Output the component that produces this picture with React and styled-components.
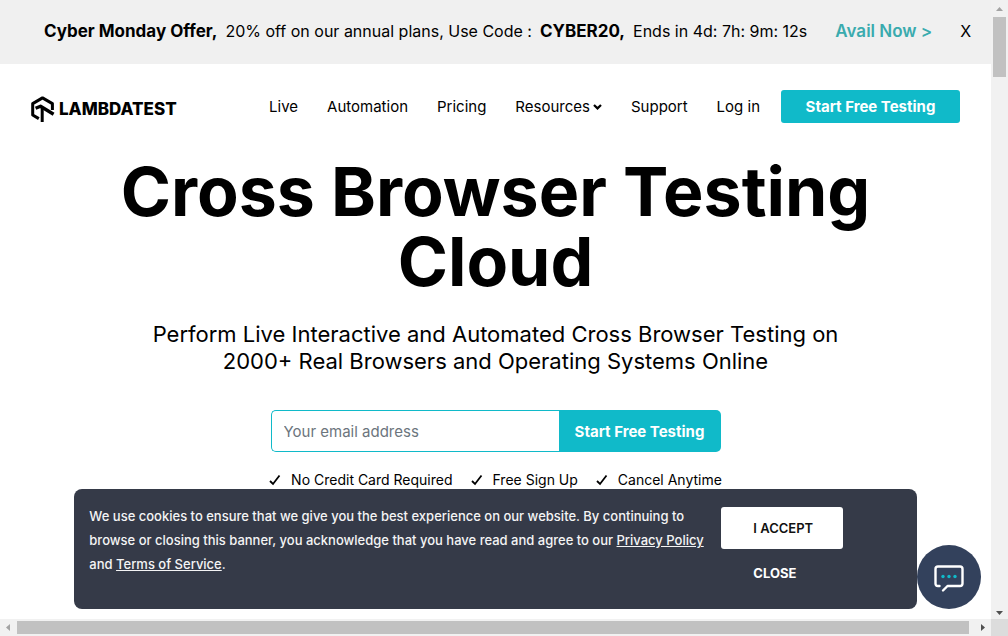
import React from "react";
import styled, { createGlobalStyle } from "styled-components";

const teal = "#10bac9";

const GlobalStyle = createGlobalStyle`
  *, *::before, *::after { box-sizing: border-box; }
  body { margin: 0; background: #fff; color: #000; font-family: Inter, "Open Sans", sans-serif; font-size: 16px; }
  button, input { font-family: inherit; }
  h1, p, ul { margin: 0; padding: 0; }
  a { color: inherit; text-decoration: none; }
`;

const Frame = styled.div`
  display: grid;
  grid-template-columns: minmax(0, 1fr) 17px;
  grid-template-rows: minmax(0, 1fr) 17px;
  height: 100vh;
  overflow: hidden;
`;

const Page = styled.div`
  position: relative;
  overflow: hidden;
`;

const Promo = styled.aside`
  display: flex;
  align-items: center;
  justify-content: space-between;
  gap: 28px;
  height: 64px;
  padding: 0 23px 2px 44px;
  background: #f0f0f0;
  font-size: 16px;
  white-space: nowrap;
`;

const PromoText = styled.p`
  display: flex;
  align-items: baseline;
  gap: 8px;
  margin-right: auto;
  b { font-size: 17px; }
`;

const PromoLink = styled.a`
  color: #3aabae;
  font-size: 17px;
  font-weight: 600;
`;

const Dismiss = styled.button`
  padding: 0;
  border: 0;
  background: none;
  font-size: 16px;
`;

const Header = styled.header`
  display: flex;
  align-items: center;
  justify-content: space-between;
  height: 84px;
  padding: 0 31px 0 30px;
`;

const Brand = styled.a`
  display: flex;
  align-items: center;
  gap: 4px;
  padding-top: 5px;
  font-size: 17px;
  font-weight: 800;
`;

const Nav = styled.nav`
  display: flex;
  align-items: center;
  gap: 21px;
`;

const NavLinks = styled.div`
  display: flex;
  gap: 29px;
  font-size: 15px;
  white-space: nowrap;
`;

const NavLink = styled.a`
  display: flex;
  align-items: center;
  gap: 3px;
`;

const PrimaryButton = styled.button`
  height: ${(p) => (p.$joined ? 42 : 33)}px;
  width: ${(p) => (p.$joined ? 162 : 179)}px;
  padding: 0;
  border: 0;
  border-radius: ${(p) => (p.$joined ? "0 5px 5px 0" : "3px")};
  background: ${teal};
  color: #fff;
  font-size: 15px;
  font-weight: 700;
`;

const Hero = styled.main`
  display: flex;
  flex-direction: column;
  align-items: center;
  padding-top: 8px;
  text-align: center;
`;

const Title = styled.h1`
  max-width: 840px;
  font-size: 68px;
  line-height: 70px;
  font-weight: 700;
`;

const Lead = styled.p`
  max-width: 720px;
  padding-top: 25px;
  font-size: 22px;
  line-height: 27px;
`;

const SignUp = styled.form`
  display: flex;
  padding-top: 35px;
`;

const Email = styled.input`
  width: 288px;
  height: 42px;
  padding: 0 12px;
  border: 1px solid ${teal};
  border-right: 0;
  border-radius: 5px 0 0 5px;
  outline: 0;
  font-size: 15px;
  &::placeholder { color: #6c757d; opacity: 1; }
`;

const Perks = styled.ul`
  display: flex;
  gap: 18px;
  padding-top: 19px;
  list-style: none;
  font-size: 14px;
  line-height: 18px;
`;

const Perk = styled.li`
  display: flex;
  align-items: center;
  gap: 10px;
`;

const Cookies = styled.section`
  position: absolute;
  left: 0;
  right: 0;
  bottom: 10px;
  display: flex;
  gap: 16px;
  width: 85%;
  height: 120px;
  margin: 0 auto;
  padding: 15px;
  border-radius: 8px;
  background: #353a48;
  color: #f4f4f5;
`;

const CookieText = styled.p`
  width: 616px;
  font-size: 13px;
  line-height: 24px;
  font-weight: 500;
  a { text-decoration: underline; }
`;

const CookieActions = styled.div`
  display: flex;
  flex-direction: column;
  width: 122px;
  padding-top: 3px;
`;

const CookieButton = styled.button`
  flex: none;
  height: ${(p) => (p.$plain ? 48 : 42)}px;
  padding: 0 32px;
  border: 0;
  border-radius: 3px;
  background: ${(p) => (p.$plain ? "none" : "#fff")};
  color: ${(p) => (p.$plain ? "#fff" : "#111")};
  font-size: 13px;
  font-weight: ${(p) => (p.$plain ? 700 : 600)};
  text-align: left;
  white-space: nowrap;
`;

const Chat = styled.button`
  position: absolute;
  right: 10px;
  bottom: 10px;
  display: grid;
  place-items: center;
  width: 64px;
  height: 64px;
  padding: 0;
  border: 0;
  border-radius: 50%;
  background: #33415c;
`;

const Track = styled.div`
  display: flex;
  flex-direction: ${(p) => (p.$vertical ? "column" : "row")};
  align-items: center;
  justify-content: space-between;
  background: #f1f1f1;
`;

const Thumb = styled.div`
  width: ${(p) => (p.$vertical ? "13px" : "auto")};
  height: ${(p) => (p.$vertical ? "60px" : "13px")};
  flex: ${(p) => (p.$vertical ? "none" : "1")};
  margin-right: ${(p) => (p.$vertical ? "0" : "5px")};
  background: #c1c1c1;
`;

const Spacer = styled.div`
  flex: 1;
`;

const Corner = styled.div`
  background: #dcdcdc;
`;

const Arrow = ({ points, fill }) => (
  <svg width="17" height="17" viewBox="0 0 17 17" aria-hidden="true">
    <polygon points={points} fill={fill} />
  </svg>
);

const Tick = () => (
  <svg width="12" height="12" viewBox="0 0 12 12" aria-hidden="true">
    <path d="M1 7 L4 10 L10.500 1.500" fill="none" stroke="#000" strokeWidth="1.800" />
  </svg>
);

const Logo = () => (
  <svg width="25" height="28" viewBox="0 0 25 28" aria-hidden="true">
    <g fill="none" stroke="#000" strokeWidth="3" strokeLinejoin="round">
      <path d="M8.800 23.600 L2.700 20 V8.600 L12.500 2.900 L22.400 8.600 V15" />
      <path d="M5.600 13.200 L10.500 11.200 L23.600 19.200" strokeWidth="3.400" />
      <path d="M12.200 12 V27" />
    </g>
  </svg>
);

const perks = ["No Credit Card Required", "Free Sign Up", "Cancel Anytime"];

export default function App() {
  return (
    <Frame>
      <GlobalStyle />
      <Page>
        <Promo>
          <PromoText>
            <b>Cyber Monday Offer,</b>
            <span>20% off on our annual plans, Use Code :</span>
            <b>CYBER20,</b>
            <span>Ends in 4d: 7h: 9m: 12s</span>
          </PromoText>
          <PromoLink href="#offer">Avail Now &gt;</PromoLink>
          <Dismiss type="button" aria-label="Close offer">X</Dismiss>
        </Promo>
        <Header>
          <Brand href="#home"><Logo />LAMBDATEST</Brand>
          <Nav>
            <NavLinks>
              <NavLink href="#live">Live</NavLink>
              <NavLink href="#automation">Automation</NavLink>
              <NavLink href="#pricing">Pricing</NavLink>
              <NavLink href="#resources">
                Resources
                <svg width="9" height="7" viewBox="0 0 9 7" aria-hidden="true">
                  <path d="M1 2 L4.500 5.400 L8 2" fill="none" stroke="#000" strokeWidth="2.200" />
                </svg>
              </NavLink>
              <NavLink href="#support">Support</NavLink>
              <NavLink href="#login">Log in</NavLink>
            </NavLinks>
            <PrimaryButton type="button">Start Free Testing</PrimaryButton>
          </Nav>
        </Header>
        <Hero>
          <Title>Cross Browser Testing Cloud</Title>
          <Lead>
            Perform Live Interactive and Automated Cross Browser Testing on 2000+ Real Browsers and Operating Systems Online
          </Lead>
          <SignUp>
            <Email type="email" placeholder="Your email address" aria-label="Your email address" />
            <PrimaryButton $joined type="button">Start Free Testing</PrimaryButton>
          </SignUp>
          <Perks>
            {perks.map((perk) => (
              <Perk key={perk}><Tick />{perk}</Perk>
            ))}
          </Perks>
        </Hero>
        <Cookies aria-label="Cookies">
          <CookieText>
            We use cookies to ensure that we give you the best experience on our website. By continuing to browse or closing this banner, you acknowledge that you have read and agree to our <a href="#privacy">Privacy Policy</a> and <a href="#terms">Terms of Service</a>.
          </CookieText>
          <CookieActions>
            <CookieButton type="button">I ACCEPT</CookieButton>
            <CookieButton $plain type="button">CLOSE</CookieButton>
          </CookieActions>
        </Cookies>
        <Chat type="button" aria-label="Open chat">
          <svg width="32" height="32" viewBox="0 0 32 32" aria-hidden="true">
            <path d="M6.500 25 H5 Q2.500 25 2.500 22.500 V8 Q2.500 5.500 5 5.500 H27 Q29.500 5.500 29.500 8 V22.500 Q29.500 25 27 25 H14.500 L10 29.500" fill="none" stroke="#fff" strokeWidth="2.400" strokeLinecap="round" strokeLinejoin="round" />
            <g fill={teal}>
              <circle cx="10" cy="15.500" r="1.700" />
              <circle cx="16" cy="15.500" r="1.700" />
              <circle cx="22" cy="15.500" r="1.700" />
            </g>
          </svg>
        </Chat>
      </Page>
      <Track $vertical>
        <Arrow points="5,11 12,11 8.500,7" fill="#a3a3a3" />
        <Thumb $vertical />
        <Spacer />
        <Arrow points="5,9 12,9 8.500,13" fill="#505050" />
      </Track>
      <Track>
        <Arrow points="10,5 10,12 6,8.500" fill="#a3a3a3" />
        <Thumb />
        <Arrow points="7,5 7,12 11,8.500" fill="#505050" />
      </Track>
      <Corner />
    </Frame>
  );
}
